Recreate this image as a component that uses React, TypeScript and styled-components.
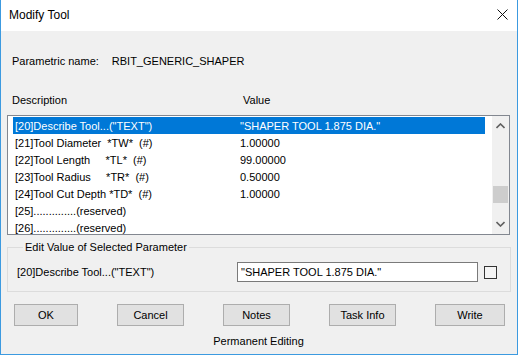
import React from "react";
import styled, { createGlobalStyle } from "styled-components";

const GlobalStyle = createGlobalStyle`
  html, body {
    margin: 0;
    padding: 0;
    background: #ffffff;
  }
  * {
    box-sizing: border-box;
  }
`;

type Row = { desc: string; value: string };

const rows: Row[] = [
  { desc: '[20]Describe Tool...("TEXT")', value: '"SHAPER TOOL 1.875 DIA."' },
  { desc: "[21]Tool Diameter  *TW*  (#)", value: "1.00000" },
  { desc: "[22]Tool Length     *TL*  (#)", value: "99.00000" },
  { desc: "[23]Tool Radius     *TR*  (#)", value: "0.50000" },
  { desc: "[24]Tool Cut Depth *TD*  (#)", value: "1.00000" },
  { desc: "[25]..............(reserved)", value: "" },
  { desc: "[26]..............(reserved)", value: "" },
];

const buttons = [
  { label: "OK", width: 64 },
  { label: "Cancel", width: 67 },
  { label: "Notes", width: 67 },
  { label: "Task Info", width: 67 },
  { label: "Write", width: 70 },
];

const App = () => {
  return (
    <>
      <GlobalStyle />
      <Window>
        <TitleBar>
          <Title>Modify Tool</Title>
          <CloseIcon viewBox="0 0 11 11">
            <path d="M0.5 0.5 L10.5 10.5 M10.5 0.5 L0.5 10.5" />
          </CloseIcon>
        </TitleBar>
        <Body>
          <ParamRow>
            <span>Parametric name:</span>
            <ParamValue>RBIT_GENERIC_SHAPER</ParamValue>
          </ParamRow>
          <HeaderRow>
            <DescCol $width={231}>Description</DescCol>
            <span>Value</span>
          </HeaderRow>
          <ListBox>
            <ListRows>
              {rows.map((r, i) => (
                <ListRow key={i} $selected={i === 0}>
                  <DescCol $width={225}>{r.desc}</DescCol>
                  <span>{r.value}</span>
                </ListRow>
              ))}
            </ListRows>
            <ScrollBar>
              <ArrowIcon viewBox="0 0 9 6">
                <path d="M0.5 5 L4.5 1 L8.5 5" />
              </ArrowIcon>
              <Track>
                <Thumb />
              </Track>
              <ArrowIcon viewBox="0 0 9 6">
                <path d="M0.5 1 L4.5 5 L8.5 1" />
              </ArrowIcon>
            </ScrollBar>
          </ListBox>
          <Group>
            <Legend>Edit Value of Selected Parameter</Legend>
            <EditRow>
              <EditLabel>[20]Describe Tool...("TEXT")</EditLabel>
              <ValueInput>"SHAPER TOOL 1.875 DIA."</ValueInput>
              <CheckBox />
            </EditRow>
          </Group>
          <ButtonRow>
            {buttons.map((b) => (
              <Button key={b.label} $width={b.width}>
                {b.label}
              </Button>
            ))}
          </ButtonRow>
          <Footer>Permanent Editing</Footer>
        </Body>
      </Window>
    </>
  );
};

const Window = styled.div`
  width: 518px;
  height: 355px;
  border: 1px solid #3c9ae0;
  border-top: none;
  display: flex;
  flex-direction: column;
  font-family: "Liberation Sans", Arial, sans-serif;
  font-size: 11px;
  color: #000;
  overflow: hidden;
`;

const TitleBar = styled.div`
  height: 31px;
  flex-shrink: 0;
  background: #fff;
  display: flex;
  align-items: center;
  justify-content: space-between;
  padding: 0 9px 2px 8px;
`;

const Title = styled.div`
  font-size: 12px;
  color: #000;
`;

const CloseIcon = styled.svg`
  width: 11px;
  height: 11px;
  fill: none;
  stroke: #111;
  stroke-width: 1;
`;

const Body = styled.div`
  flex: 1;
  background: #f0f0f0;
  padding: 24px 7px 0 6px;
  display: flex;
  flex-direction: column;
`;

const ParamRow = styled.div`
  display: flex;
  line-height: 13px;
  padding-left: 5px;
`;

const ParamValue = styled.span`
  margin-left: 13px;
`;

const HeaderRow = styled.div`
  display: flex;
  line-height: 13px;
  margin-top: 26px;
  padding-left: 5px;
`;

const DescCol = styled.span<{ $width: number }>`
  width: ${(p) => p.$width}px;
  flex-shrink: 0;
  white-space: pre;
`;

const ListBox = styled.div`
  margin-top: 8px;
  height: 120px;
  border: 1px solid #828790;
  background: #fff;
  display: flex;
`;

const ListRows = styled.div`
  flex: 1;
  padding: 1px 7px 0 5px;
`;

const ListRow = styled.div<{ $selected: boolean }>`
  height: 17px;
  display: flex;
  align-items: center;
  padding-left: 2px;
  white-space: pre;
  background: ${(p) => (p.$selected ? "#0078d7" : "transparent")};
  color: ${(p) => (p.$selected ? "#fff" : "#000")};
`;

const ScrollBar = styled.div`
  width: 17px;
  flex-shrink: 0;
  background: #f0f0f0;
  display: flex;
  flex-direction: column;
  align-items: center;
  padding: 7px 0 7px;
`;

const ArrowIcon = styled.svg`
  width: 9px;
  height: 6px;
  fill: none;
  stroke: #606060;
  stroke-width: 1.6;
`;

const Track = styled.div`
  flex: 1;
  align-self: stretch;
  display: flex;
  flex-direction: column;
  justify-content: flex-end;
  padding: 0 1px 18px;
`;

const Thumb = styled.div`
  height: 17px;
  background: #cdcdcd;
`;

const Group = styled.fieldset`
  margin: 6px 0 0 0;
  padding: 8px 13px 9px 9px;
  border: 1px solid #dcdcdc;
  min-width: 0;
  width: 504px;
`;

const Legend = styled.legend`
  padding: 0 2px;
  margin-left: 6px;
  line-height: 13px;
`;

const EditRow = styled.div`
  display: flex;
  align-items: center;
`;

const EditLabel = styled.span`
  width: 220px;
  flex-shrink: 0;
`;

const ValueInput = styled.div`
  width: 241px;
  height: 20px;
  border: 1px solid #7a7a7a;
  background: #fff;
  padding-left: 3px;
  display: flex;
  align-items: center;
`;

const CheckBox = styled.div`
  width: 13px;
  height: 13px;
  margin-left: 6px;
  border: 1px solid #333;
  background: #f4f4f4;
`;

const ButtonRow = styled.div`
  display: flex;
  gap: 39px;
  padding-left: 7px;
  margin-top: 12px;
`;

const Button = styled.div<{ $width: number }>`
  width: ${(p) => p.$width}px;
  height: 22px;
  background: #e1e1e1;
  border: 1px solid #adadad;
  display: flex;
  align-items: center;
  justify-content: center;
`;

const Footer = styled.div`
  margin-top: 9px;
  line-height: 13px;
  text-align: center;
`;

export default App;
